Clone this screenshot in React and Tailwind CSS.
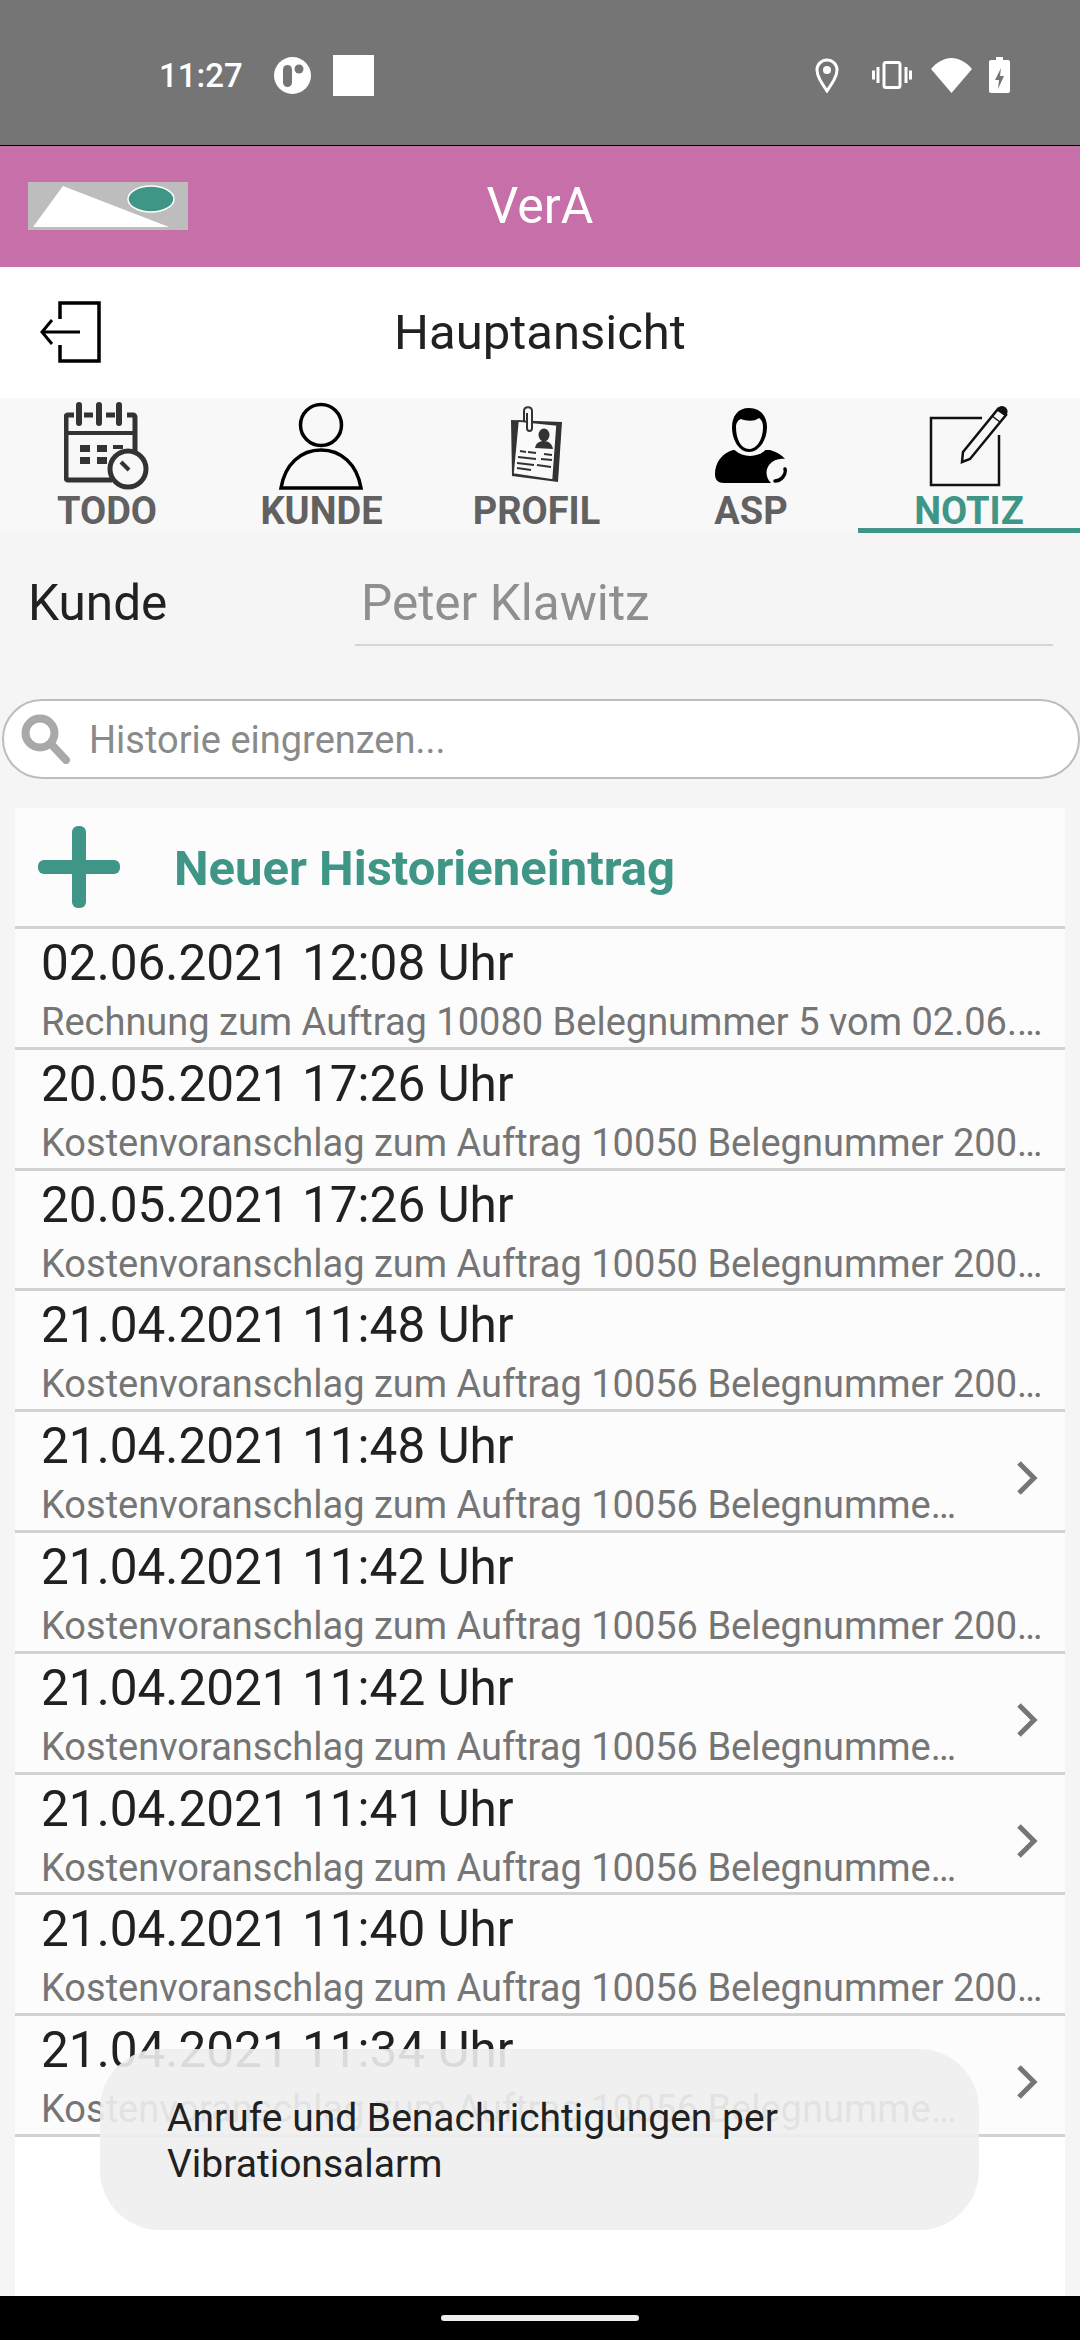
const rows = [
  { date: '02.06.2021 12:08 Uhr', text: 'Rechnung zum Auftrag 10080 Belegnummer 5 vom 02.06.2021 über 1200,00 Euro' },
  { date: '20.05.2021 17:26 Uhr', text: 'Kostenvoranschlag zum Auftrag 10050 Belegnummer 2000 vom 20.05.2021' },
  { date: '20.05.2021 17:26 Uhr', text: 'Kostenvoranschlag zum Auftrag 10050 Belegnummer 2000 vom 20.05.2021' },
  { date: '21.04.2021 11:48 Uhr', text: 'Kostenvoranschlag zum Auftrag 10056 Belegnummer 2000 vom 21.04.2021' },
  { date: '21.04.2021 11:48 Uhr', text: 'Kostenvoranschlag zum Auftrag 10056 Belegnummer 2000 vom 21.04.2021', more: true },
  { date: '21.04.2021 11:42 Uhr', text: 'Kostenvoranschlag zum Auftrag 10056 Belegnummer 2000 vom 21.04.2021' },
  { date: '21.04.2021 11:42 Uhr', text: 'Kostenvoranschlag zum Auftrag 10056 Belegnummer 2000 vom 21.04.2021', more: true },
  { date: '21.04.2021 11:41 Uhr', text: 'Kostenvoranschlag zum Auftrag 10056 Belegnummer 2000 vom 21.04.2021', more: true },
  { date: '21.04.2021 11:40 Uhr', text: 'Kostenvoranschlag zum Auftrag 10056 Belegnummer 2000 vom 21.04.2021' },
  { date: '21.04.2021 11:34 Uhr', text: 'Kostenvoranschlag zum Auftrag 10056 Belegnummer 2000 vom 21.04.2021', more: true },
];

const CalendarIcon = () => (
  <svg width="86" height="90" viewBox="0 -4 86 90" fill="none">
    <path d="M10 11H4a2 2 0 0 0-2 2v61a2 2 0 0 0 2 2h44M71 48V13a2 2 0 0 0-2-2h-6M20 11h9M42 11h9" stroke="#333" strokeWidth="5" />
    <path d="M15 1v18M35 1v18M55 1v18" stroke="#333" strokeWidth="6" strokeLinecap="round" />
    <path d="M3 29h66" stroke="#333" strokeWidth="4" />
    <path d="M16 41h10v7H16zM33 41h10v7H33zM49 41h10v4H49zM16 53h10v7H16zM33 53h10v7H33z" fill="#333" />
    <circle cx="64" cy="65" r="18" fill="#f8f8f8" stroke="#333" strokeWidth="5" />
    <path d="M57 58l8 8" stroke="#333" strokeWidth="4" />
  </svg>
);

const PersonIcon = () => (
  <svg width="85" height="90" viewBox="0 -4 85 90" fill="none">
    <circle cx="42" cy="21" r="20.5" stroke="#000" strokeWidth="3.5" />
    <path d="M2 84C6 60 22 46 42 46s36 14 40 38z" stroke="#000" strokeWidth="3.5" />
  </svg>
);

const ProfileIcon = () => (
  <svg width="73" height="90" viewBox="0 0 73 90" fill="none">
    <path d="M11 20l51 2-4 60-46-6z" fill="#333" />
    <path d="M18 21l39 4-4 55-40-6z" fill="#fafafa" stroke="#333" strokeWidth="1.5" />
    <path d="M24 22V11c0-5 8-5 8 0v17c0 4-5 4-5 0V13" stroke="#333" strokeWidth="2" fill="#fafafa" />
    <ellipse cx="44" cy="35" rx="5.500" ry="6.500" fill="#333" />
    <path d="M35 48c1-5 4-7 9-7s8 3 9 8z" fill="#333" />
    <path d="M20 51l6 1M28 52l8 1M44 54l8 1M18 57l18 2M41 59l11 1M17 63l17 2M37 65l14 2M17 68l14 2" stroke="#333" strokeWidth="2" />
  </svg>
);

const ContactIcon = () => (
  <svg width="102" height="90" viewBox="0 0 102 90" fill="none">
    <path d="M33 50C22 53 15 63 15 74c0 6 3 9 9 9h47c-5-5-6-12-2-18 4-5 10-7 16-6-3-4-8-7-15-9z" fill="#000" />
    <ellipse cx="50" cy="37" rx="21" ry="19" fill="#f8f8f8" />
    <path d="M49 8C38 8 32 16 32 27c0 13 7 25 17 25s18-12 18-25C67 16 60 8 49 8z" fill="#000" />
    <path d="M36 27c0-4 2-7 5-8 5 2 13 3 18-1 3 2 4 5 4 9 0 12-6 22-14 22S36 39 36 27z" fill="#f8f8f8" />
    <path d="M85 69c1 3-1 7-3 9-2 2-5 3-7 3" stroke="#000" strokeWidth="3.500" strokeLinecap="round" />
  </svg>
);

const NoteIcon = () => (
  <svg width="90" height="90" viewBox="0 0 90 90" fill="none">
    <path d="M58 18H7v67h68V35" stroke="#111" strokeWidth="2.500" />
    <path d="M38 62l1-10L74 9l8 6-36 44z" fill="#f8f8f8" stroke="#111" strokeWidth="2.500" />
    <path d="M73 9c2-3 5-4 8-2s3 5 2 7l-2 2-9-6z" fill="#111" />
    <path d="M68 16l8 6" stroke="#111" strokeWidth="1.500" />
  </svg>
);

const tabs = [
  { label: 'TODO', icon: <CalendarIcon /> },
  { label: 'KUNDE', icon: <PersonIcon /> },
  { label: 'PROFIL', icon: <ProfileIcon /> },
  { label: 'ASP', icon: <ContactIcon /> },
  { label: 'NOTIZ', icon: <NoteIcon />, active: true },
];

const StatusBar = () => (
  <div className="flex h-[146px] items-center border-b border-black bg-[#757575] pt-[5px] pl-[159px] text-white">
    <span className="mr-[31px] text-[33px] font-medium leading-none">11:27</span>
    <svg width="37" height="37" viewBox="0 0 37 37" className="mr-[22px]">
      <circle cx="18.5" cy="18.5" r="18.5" fill="#fff" />
      <rect x="9" y="8" width="9" height="22" rx="4.5" fill="#757575" />
      <circle cx="25" cy="12" r="4.5" fill="#757575" />
    </svg>
    <div className="h-[41px] w-[41px] bg-white" />
    <div className="ml-[441px] flex items-center">
      <svg width="24" height="35" viewBox="0 0 24 35" fill="none" className="mr-[33px]">
        <path d="M12 33C6 24 2 18 2 12a10 10 0 0 1 20 0c0 6-4 12-10 21z" stroke="#fff" strokeWidth="3" />
        <circle cx="12" cy="12" r="4" fill="#fff" />
      </svg>
      <svg width="40" height="28" viewBox="0 0 40 28" fill="none" className="mr-[19px]">
        <rect x="12" y="1.5" width="16" height="25" rx="2" stroke="#fff" strokeWidth="3" />
        <path d="M6 6v16M1.500 9.500v9M34 6v16M38.500 9.500v9" stroke="#fff" strokeWidth="3" />
      </svg>
      <svg width="41" height="35" viewBox="0 0 41 35" className="mr-[17px]">
        <path d="M20.500 35L0 11C6 4 13 0 20.500 0S35 4 41 11z" fill="#fff" />
      </svg>
      <svg width="21" height="36" viewBox="0 0 21 36">
        <path d="M7 0h7v3h5a2 2 0 0 1 2 2v29a2 2 0 0 1-2 2H2a2 2 0 0 1-2-2V5a2 2 0 0 1 2-2h5z" fill="#fff" />
        <path d="M12 11l-6 12h4l-1 9 6-13h-4z" fill="#757575" />
      </svg>
    </div>
  </div>
);

const Row = ({ date, text, more }) => (
  <div className="flex h-[120.8px] items-start border-b-[3px] border-[#d2d2d2] bg-[#fcfcfc] pl-[26px] pr-[15px] pt-[5px]">
    <div className={more ? 'w-[918px]' : 'w-[1004px]'}>
      <div className="text-[49.5px] leading-[58px] text-[#212121]">{date}</div>
      <div className="mt-[4px] truncate text-[38px] leading-[52px] text-[#757575]">{text}</div>
    </div>
    {more && (
      <svg width="22" height="34" viewBox="0 0 22 34" fill="none" className="ml-auto mr-[12px] mt-[44px]">
        <path d="M3 2l15 15L3 32" stroke="#757575" strokeWidth="5" />
      </svg>
    )}
  </div>
);

export default function App() {
  return (
    <div className="relative flex h-[2340px] w-[1080px] flex-col overflow-hidden bg-[#f5f5f5] font-['Roboto',sans-serif]">
      <StatusBar />

      <div className="relative flex h-[121px] items-center justify-center bg-[#c76fa9]">
        <svg width="160" height="48" viewBox="0 0 160 48" className="absolute left-[28px] top-[36px]">
          <rect width="160" height="48" fill="#bdbdbd" />
          <path d="M35 4L5 45h136z" fill="#fff" />
          <ellipse cx="123" cy="17" rx="23" ry="13" fill="#3f9686" stroke="#fff" strokeWidth="1.500" />
        </svg>
        <span className="text-[50px] text-white">VerA</span>
      </div>

      <div className="relative flex h-[131px] items-center justify-center bg-white">
        <svg width="62" height="62" viewBox="0 0 62 62" fill="none" className="absolute left-[39px] top-[34px]">
          <path d="M21 18V2h39v58H21V44" stroke="#000" strokeWidth="3.500" />
          <path d="M41 31H3M13 19L3 31l10 12" stroke="#000" strokeWidth="3" />
        </svg>
        <span className="text-[49px] text-[#212121]">Hauptansicht</span>
      </div>

      <div className="grid h-[135px] grid-cols-[214px_215px_215px_214px_222px] bg-[#f8f8f8]">
        {tabs.map((tab) => (
          <div
            key={tab.label}
            className={`flex flex-col items-center border-b-[5px] ${tab.active ? 'border-[#3f9686]' : 'border-transparent'}`}
          >
            <div className="h-[97px] pt-[2px]">{tab.icon}</div>
            <div
              className={`text-[38px] font-bold leading-[32px] ${tab.active ? 'text-[#3f9686]' : 'text-[#616161]'}`}
            >
              {tab.label}
            </div>
          </div>
        ))}
      </div>

      <div className="flex h-[113px] items-start pl-[28px] pr-[27px] pt-[40px]">
        <span className="w-[327px] text-[49.500px] leading-[60px] text-[#212121]">Kunde</span>
        <div className="h-[73px] flex-1 border-b-2 border-[#d6d6d6] pl-[6px] text-[49.500px] leading-[60px] text-[#8f8f8f]">
          Peter Klawitz
        </div>
      </div>

      <div className="mt-[53px] ml-[2px] flex h-[80px] items-center rounded-[40px] border-2 border-[#bdbdbd] bg-white pl-[17px]">
        <svg width="50" height="50" viewBox="0 0 50 50" fill="none">
          <circle cx="19" cy="19" r="14.500" stroke="#a9a9a9" strokeWidth="8" />
          <path d="M30 30l15 16" stroke="#a9a9a9" strokeWidth="8" strokeLinecap="round" />
        </svg>
        <span className="ml-[18px] pt-[2px] text-[38px] text-[#8a8a8a]">Historie eingrenzen...</span>
      </div>

      <div className="mx-[15px] mt-[29px] flex-1 bg-white">
        <div className="flex h-[121px] items-center border-b-[3px] border-[#d2d2d2] bg-[#fcfcfc] pl-[23px]">
          <svg width="82" height="82" viewBox="0 0 82 82">
            <rect x="34" y="0" width="14" height="82" rx="6" fill="#3f9686" />
            <rect x="0" y="34" width="82" height="14" rx="6" fill="#3f9686" />
          </svg>
          <span className="ml-[54px] pt-[3px] text-[49px] font-bold text-[#3f9686]">Neuer Historieneintrag</span>
        </div>
        {rows.map((row, i) => (
          <Row key={i} {...row} />
        ))}
      </div>

      <div className="flex h-[44px] items-center justify-center bg-black">
        <div className="h-[6px] w-[198px] rounded-full bg-[#eeeeee]" />
      </div>

      <div className="absolute left-[100px] top-[2049px] h-[181px] w-[879px] rounded-[60px] bg-[#eeeeee]/90 pl-[67px] pt-[46px] text-[39px] leading-[46px] text-[#212121]">
        Anrufe und Benachrichtigungen per
        <br />
        Vibrationsalarm
      </div>
    </div>
  );
}
